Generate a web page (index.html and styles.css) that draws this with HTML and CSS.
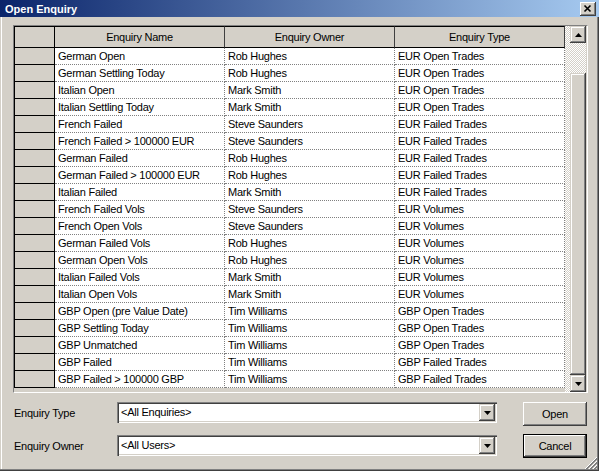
FILE: index.html
```html
<!DOCTYPE html>
<html>
<head>
<meta charset="utf-8">
<title>Open Enquiry</title>
<link rel="stylesheet" href="styles.css">
</head>
<body>
<div class="window">
  <div class="titlebar">
    <span class="title">Open Enquiry</span>
    <span class="close"><svg width="16" height="14" viewBox="0 0 16 14"><path d="M4.5 3.5l6 6M10.5 3.5l-6 6" stroke="#000" stroke-width="1.6" fill="none"/></svg></span>
  </div>
  <div class="content">
    <div class="gridframe">
      <div class="grid">
        <div class="sel hsel"></div>
        <div class="hd">Enquiry Name</div>
        <div class="hd">Enquiry Owner</div>
        <div class="hd">Enquiry Type</div>

        <div class="sel"></div><div class="cell">German Open</div><div class="cell">Rob Hughes</div><div class="cell">EUR Open Trades</div>
        <div class="sel"></div><div class="cell">German Settling Today</div><div class="cell">Rob Hughes</div><div class="cell">EUR Open Trades</div>
        <div class="sel"></div><div class="cell">Italian Open</div><div class="cell">Mark Smith</div><div class="cell">EUR Open Trades</div>
        <div class="sel"></div><div class="cell">Italian Settling Today</div><div class="cell">Mark Smith</div><div class="cell">EUR Open Trades</div>
        <div class="sel"></div><div class="cell">French Failed</div><div class="cell">Steve Saunders</div><div class="cell">EUR Failed Trades</div>
        <div class="sel"></div><div class="cell">French Failed &gt; 100000 EUR</div><div class="cell">Steve Saunders</div><div class="cell">EUR Failed Trades</div>
        <div class="sel"></div><div class="cell">German Failed</div><div class="cell">Rob Hughes</div><div class="cell">EUR Failed Trades</div>
        <div class="sel"></div><div class="cell">German Failed &gt; 100000 EUR</div><div class="cell">Rob Hughes</div><div class="cell">EUR Failed Trades</div>
        <div class="sel"></div><div class="cell">Italian Failed</div><div class="cell">Mark Smith</div><div class="cell">EUR Failed Trades</div>
        <div class="sel"></div><div class="cell">French Failed Vols</div><div class="cell">Steve Saunders</div><div class="cell">EUR Volumes</div>
        <div class="sel"></div><div class="cell">French Open Vols</div><div class="cell">Steve Saunders</div><div class="cell">EUR Volumes</div>
        <div class="sel"></div><div class="cell">German Failed Vols</div><div class="cell">Rob Hughes</div><div class="cell">EUR Volumes</div>
        <div class="sel"></div><div class="cell">German Open Vols</div><div class="cell">Rob Hughes</div><div class="cell">EUR Volumes</div>
        <div class="sel"></div><div class="cell">Italian Failed Vols</div><div class="cell">Mark Smith</div><div class="cell">EUR Volumes</div>
        <div class="sel"></div><div class="cell">Italian Open Vols</div><div class="cell">Mark Smith</div><div class="cell">EUR Volumes</div>
        <div class="sel"></div><div class="cell">GBP Open (pre Value Date)</div><div class="cell">Tim Williams</div><div class="cell">GBP Open Trades</div>
        <div class="sel"></div><div class="cell">GBP Settling Today</div><div class="cell">Tim Williams</div><div class="cell">GBP Open Trades</div>
        <div class="sel"></div><div class="cell">GBP Unmatched</div><div class="cell">Tim Williams</div><div class="cell">GBP Open Trades</div>
        <div class="sel"></div><div class="cell">GBP Failed</div><div class="cell">Tim Williams</div><div class="cell">GBP Failed Trades</div>
        <div class="sel"></div><div class="cell">GBP Failed &gt; 100000 GBP</div><div class="cell">Tim Williams</div><div class="cell">GBP Failed Trades</div>
      </div>
      <div class="strip"></div>
      <div class="vscroll">
        <div class="sb-btn"><svg width="7" height="4" viewBox="0 0 7 4"><polygon points="0,4 3.5,0 7,4" fill="#000"/></svg></div>
        <div class="track"><div class="thumb"></div></div>
        <div class="sb-btn"><svg width="7" height="4" viewBox="0 0 7 4"><polygon points="0,0 7,0 3.5,4" fill="#000"/></svg></div>
      </div>
    </div>

    <div class="controls">
      <div class="fields">
        <div class="field">
          <span class="label">Enquiry Type</span>
          <div class="combo">
            <span class="combo-text">&lt;All Enquiries&gt;</span>
            <span class="combo-btn"><svg width="7" height="4" viewBox="0 0 7 4"><polygon points="0,0 7,0 3.5,4" fill="#000"/></svg></span>
          </div>
        </div>
        <div class="field">
          <span class="label">Enquiry Owner</span>
          <div class="combo">
            <span class="combo-text">&lt;All Users&gt;</span>
            <span class="combo-btn"><svg width="7" height="4" viewBox="0 0 7 4"><polygon points="0,0 7,0 3.5,4" fill="#000"/></svg></span>
          </div>
        </div>
      </div>
      <div class="buttons">
        <div class="btn">Open</div>
        <div class="btn default">Cancel</div>
      </div>
    </div>
  </div>
  <div class="grip"><svg width="12" height="12" viewBox="0 0 12 12"><path d="M12 0L0 12M12 4L4 12M12 8L8 12" stroke="#ffffff" stroke-width="1" fill="none"/><path d="M12 1L1 12M12 2L2 12M12 5L5 12M12 6L6 12M12 9L9 12M12 10L10 12" stroke="#808080" stroke-width="1" fill="none"/></svg></div>
</div>
</body>
</html>
```

FILE: styles.css
```css
html, body {
  margin: 0;
  padding: 0;
}
body {
  width: 599px;
  height: 471px;
  overflow: hidden;
  background: #D4D0C8;
  font-family: "Liberation Sans", Arial, sans-serif;
  font-size: 11px;
  letter-spacing: -0.25px;
  color: #000;
}
.window {
  position: relative;
  width: 599px;
  height: 471px;
  box-sizing: border-box;
  background: #D4D0C8;
  box-shadow: inset -1px -1px #404040, inset -2px -2px #808080, inset 1px 0 #D4D0C8, inset 2px 0 #ffffff;
  display: flex;
  flex-direction: column;
}
.titlebar {
  flex: none;
  height: 17px;
  background: linear-gradient(to right, #0A246A, #A6CAF0);
  display: flex;
  align-items: center;
  justify-content: space-between;
  padding: 0 3px 0 5px;
}
.title {
  color: #fff;
  font-weight: bold;
  font-size: 11px;
  letter-spacing: 0;
}
.close {
  width: 16px;
  height: 14px;
  background: #D4D0C8;
  box-shadow: inset -1px -1px #404040, inset 1px 1px #ffffff, inset -2px -2px #808080;
  display: flex;
}
.content {
  padding: 8px 0 0 13px;
}
.gridframe {
  width: 575px;
  height: 368px;
  box-sizing: border-box;
  border: 1px solid;
  border-color: #808080 #ffffff #ffffff #808080;
  display: flex;
}
.grid {
  width: 551px;
  display: grid;
  grid-template-columns: 41px 170px 170px 170px;
  grid-template-rows: 22px;
  grid-auto-rows: 17px;
  align-content: start;
}
.sel {
  box-sizing: border-box;
  background: #D4D0C8;
  border-left: 1px solid #000;
  border-right: 1px solid #000;
  border-bottom: 1px solid #000;
}
.hsel {
  border-top: 1px solid #000;
}
.hd {
  box-sizing: border-box;
  background: #D4D0C8;
  border-top: 1px solid #000;
  border-bottom: 1px solid #000;
  border-right: 1px solid #404040;
  text-align: center;
  line-height: 20px;
  white-space: nowrap;
}
.cell {
  box-sizing: border-box;
  background: #fff;
  border-right: 1px dotted #808080;
  border-bottom: 1px dotted #808080;
  padding-left: 3px;
  line-height: 16px;
  white-space: nowrap;
  overflow: hidden;
}
.strip {
  width: 5px;
  background: repeating-conic-gradient(#ffffff 0 25%, #D4D0C8 0 50%) 0 0 / 2px 2px;
}
.vscroll {
  width: 16px;
  display: flex;
  flex-direction: column;
}
.sb-btn {
  flex: none;
  height: 17px;
  background: #D4D0C8;
  box-shadow: inset -1px -1px #404040, inset 1px 1px #D4D0C8, inset -2px -2px #808080, inset 2px 2px #ffffff;
  display: flex;
  align-items: center;
  justify-content: center;
}
.track {
  flex: 1;
  display: flex;
  flex-direction: column;
  padding-top: 30px;
  background: repeating-conic-gradient(#ffffff 0 25%, #D4D0C8 0 50%) 0 0 / 2px 2px;
}
.thumb {
  flex: 1;
  background: #D4D0C8;
  box-shadow: inset -1px -1px #404040, inset 1px 1px #D4D0C8, inset -2px -2px #808080, inset 2px 2px #ffffff;
}
.controls {
  display: flex;
  margin-top: 9px;
}
.fields {
  display: flex;
  flex-direction: column;
  gap: 12px;
}
.field {
  display: flex;
  align-items: center;
  height: 21px;
}
.label {
  width: 103px;
  padding-left: 1px;
}
.combo {
  width: 380px;
  height: 21px;
  box-sizing: border-box;
  padding: 2px;
  background: #fff;
  box-shadow: inset 1px 1px #808080, inset 2px 2px #404040, inset -1px -1px #ffffff, inset -2px -2px #D4D0C8;
  display: flex;
  align-items: center;
}
.combo-text {
  flex: 1;
  padding-left: 2px;
  line-height: 17px;
}
.combo-btn {
  width: 16px;
  height: 17px;
  background: #D4D0C8;
  box-shadow: inset -1px -1px #404040, inset 1px 1px #D4D0C8, inset -2px -2px #808080, inset 2px 2px #ffffff;
  display: flex;
  align-items: center;
  justify-content: center;
}
.buttons {
  margin-left: 26px;
  display: flex;
  flex-direction: column;
  gap: 8px;
}
.btn {
  width: 64px;
  height: 24px;
  box-sizing: border-box;
  background: #D4D0C8;
  box-shadow: inset -1px -1px #404040, inset 1px 1px #ffffff, inset -2px -2px #808080;
  display: flex;
  align-items: center;
  justify-content: center;
}
.btn.default {
  box-shadow: inset 0 0 0 1px #000, inset -2px -2px #404040, inset 2px 2px #ffffff, inset -3px -3px #808080;
}
.grip {
  position: absolute;
  right: 2px;
  bottom: 2px;
  width: 12px;
  height: 12px;
  display: flex;
}
```
